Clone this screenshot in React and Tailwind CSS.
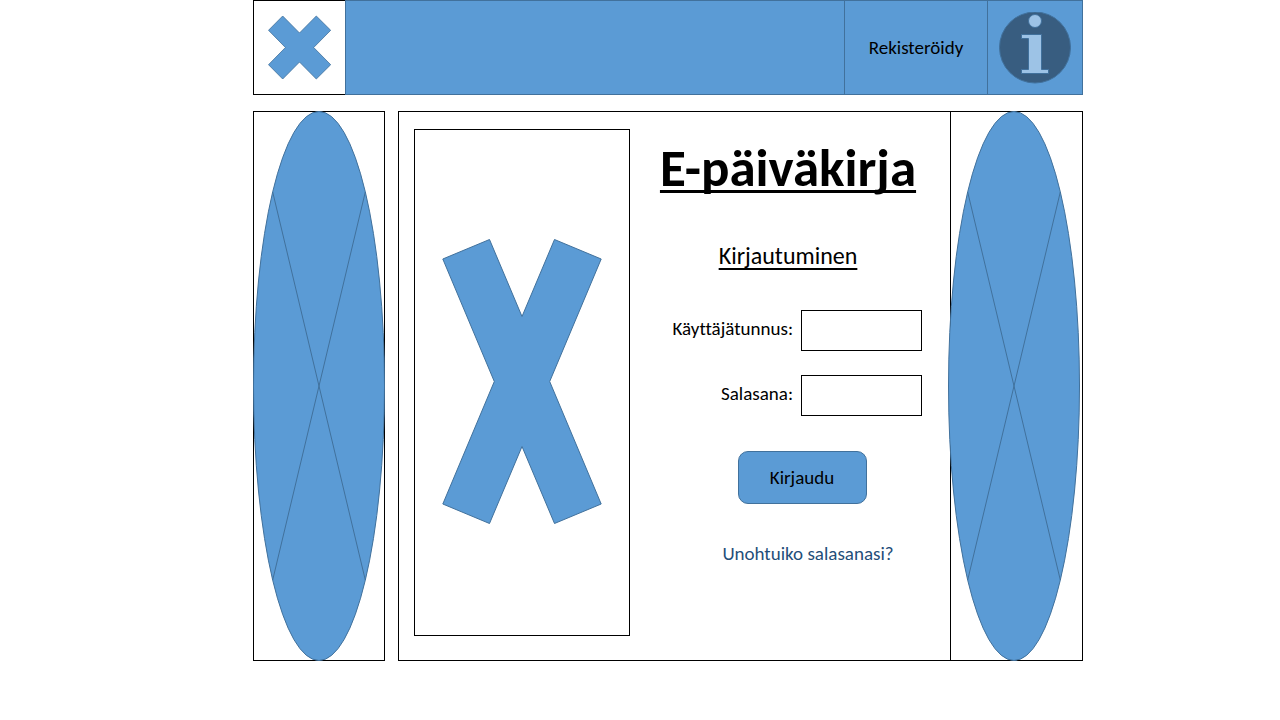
function CrossLogo() {
  return (
    <svg className="h-[65px] w-[64px]" viewBox="0 0 64 65" fill="#5b9bd5" stroke="#41719c" strokeWidth="0.8" aria-hidden="true">
      <path d="M14.7 1 L31.5 18 L48.3 1 L62.7 15.3 L45.7 32.5 L62.7 49.7 L48.3 64 L31.5 47 L14.7 64 L0.5 49.7 L17.4 32.5 L0.5 15.3 Z" />
    </svg>
  );
}

function InfoIcon() {
  return (
    <svg className="size-[72px]" viewBox="0 0 72 72" aria-hidden="true">
      <circle cx="36" cy="35.5" r="35.5" fill="#385d80" stroke="#41719c" />
      <g fill="#9dc3e6" stroke="#41719c">
        <circle cx="36" cy="9" r="6.5" />
        <path d="M22.5 22.5 H42.5 V57.5 H49.5 V61.5 H22.5 V57.5 H29.5 V26.5 H22.5 Z" />
      </g>
    </svg>
  );
}

function BigCross() {
  return (
    <svg className="h-[285px] w-[160px]" viewBox="0 0 160 285" fill="#5b9bd5" stroke="#41719c" aria-hidden="true">
      <path d="M47.5 0.5 L80 77.5 L112.5 0.5 L159.2 20 L107.7 142.5 L159.2 265 L112.5 284.5 L80 207.5 L47.5 284.5 L0.8 265 L52.3 142.5 L0.8 20 Z" />
    </svg>
  );
}

function Banner() {
  return (
    <svg className="h-[550px] w-[132px] shrink-0" viewBox="0 0 132 550" stroke="#41719c" aria-hidden="true">
      <ellipse cx="66" cy="275" rx="65.5" ry="274.5" fill="#5b9bd5" />
      <path d="M19.7 81 L112.3 469 M112.3 81 L19.7 469" fill="none" />
    </svg>
  );
}

function Field({ id, label, type }) {
  return (
    <div className="flex items-center justify-end gap-2">
      <label htmlFor={id} className="pb-1">{label}</label>
      <input id={id} name={id} type={type} className="h-[41px] w-[121px] border border-black bg-white px-2 outline-none" />
    </div>
  );
}

export default function App() {
  return (
    <div className="min-h-screen bg-white pr-[197px] pl-[253px] font-[Carlito,Lato,sans-serif] text-[19px] leading-6 text-black [font-variant-ligatures:none]">
      <header className="flex h-[95px]">
        <a href="#" aria-label="E-päiväkirja" className="flex w-[92px] items-center justify-center border border-r-0 border-black">
          <CrossLogo />
        </a>
        <div className="flex-1 border border-r-0 border-[#41719c] bg-[#5b9bd5]" />
        <button type="button" className="w-[143px] border border-r-0 border-[#41719c] bg-[#5b9bd5]">
          Rekisteröidy
        </button>
        <button type="button" aria-label="Info" className="flex w-24 items-center justify-center border border-[#41719c] bg-[#5b9bd5]">
          <InfoIcon />
        </button>
      </header>

      <div className="mt-4 flex gap-[13px]">
        <aside className="flex w-[132px] border border-black">
          <div className="-m-px">
            <Banner />
          </div>
        </aside>

        <div className="flex flex-1 border border-black">
          <main className="flex flex-1">
            <div className="mt-[17px] mb-6 ml-[15px] flex w-[216px] items-center justify-center border border-black pb-0.5">
              <BigCross />
            </div>
            <form className="flex flex-1 flex-col px-7" onSubmit={(e) => e.preventDefault()}>
              <h1 className="mt-6 mr-1 text-center text-[53px] leading-[64px] font-bold whitespace-nowrap underline decoration-[3px] underline-offset-4 [text-decoration-skip-ink:none]">
                E-päiväkirja
              </h1>
              <h2 className="mt-10 mr-1 text-center text-[24px] leading-8 underline decoration-2 underline-offset-4 [text-decoration-skip-ink:none]">
                Kirjautuminen
              </h2>
              <div className="mt-[38px] flex flex-col gap-6">
                <Field id="username" label="Käyttäjätunnus:" type="text" />
                <Field id="password" label="Salasana:" type="password" />
              </div>
              <button type="submit" className="mt-[35px] ml-6 h-[53px] w-[129px] self-center rounded-[10px] border border-[#41719c] bg-[#5b9bd5]">
                Kirjaudu
              </button>
              <a href="#" className="mt-[38px] ml-9 self-center text-[#1f4e79]">
                Unohtuiko salasanasi?
              </a>
            </form>
          </main>
          <aside className="flex w-[132px] border-l border-black">
            <div className="-my-px -ml-[3px]">
              <Banner />
            </div>
          </aside>
        </div>
      </div>
    </div>
  );
}
